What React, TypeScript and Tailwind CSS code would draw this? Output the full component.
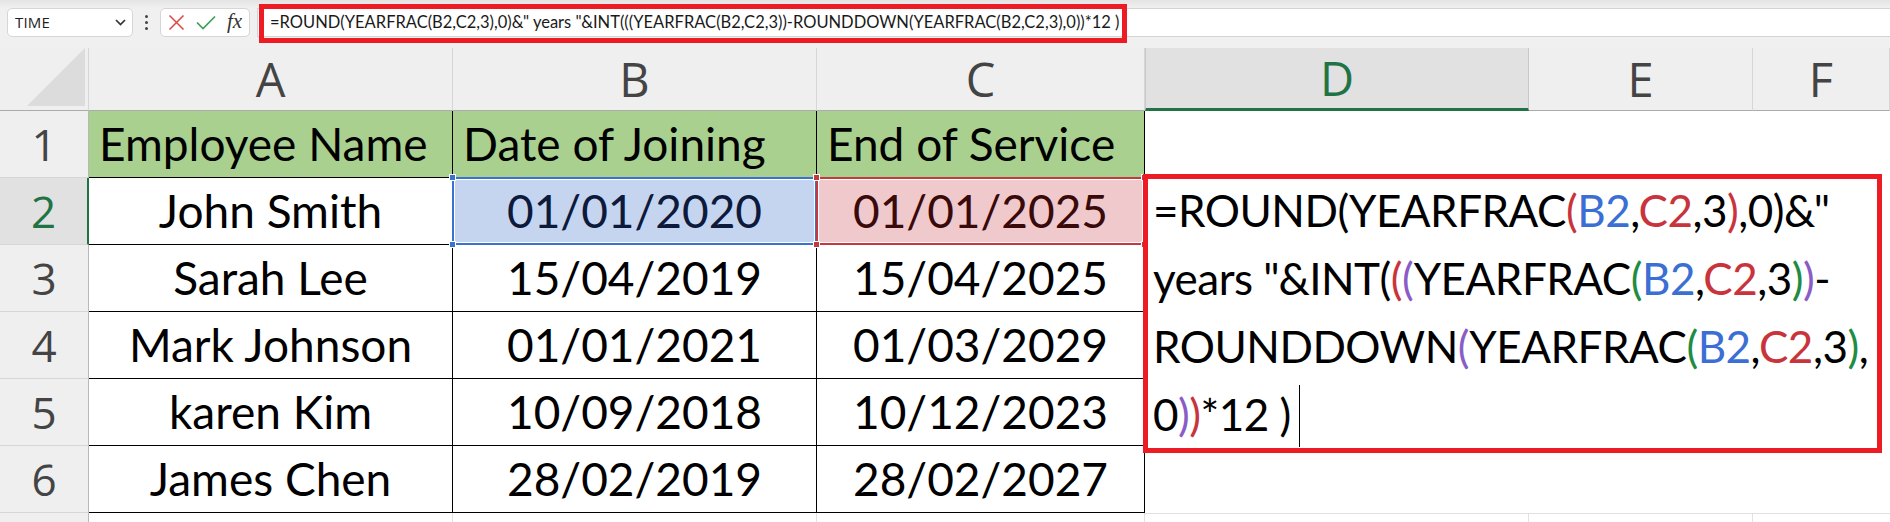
import React from "react";

type Seg = [string, "k" | "r" | "b" | "p" | "g"];

const colorCls: Record<Seg[1], string> = {
  k: "text-black",
  r: "text-[#c9343c]",
  b: "text-[#3b6fd3]",
  p: "text-[#8a5cc6]",
  g: "text-[#1e8c42]",
};

const editLines: Seg[][] = [
  [["=ROUND(YEARFRAC", "k"], ["(", "r"], ["B2", "b"], [",", "k"], ["C2", "r"], [",3", "k"], [")", "r"], [',0)&"', "k"]],
  [['years "&INT(', "k"], ["(", "r"], ["(", "p"], ["YEARFRAC", "k"], ["(", "g"], ["B2", "b"], [",", "k"], ["C2", "r"], [",3", "k"], [")", "g"], [")", "p"], ["-", "k"]],
  [["ROUNDDOWN", "k"], ["(", "p"], ["YEARFRAC", "k"], ["(", "g"], ["B2", "b"], [",", "k"], ["C2", "r"], [",3", "k"], [")", "g"], [",", "k"]],
  [["0", "k"], [")", "p"], [")", "r"], ["*12 )", "k"]],
];

const rows = [
  ["Employee Name", "Date of Joining", "End of Service"],
  ["John Smith", "01/01/2020", "01/01/2025"],
  ["Sarah Lee", "15/04/2019", "15/04/2025"],
  ["Mark Johnson", "01/01/2021", "01/03/2029"],
  ["karen Kim", "10/09/2018", "10/12/2023"],
  ["James Chen", "28/02/2019", "28/02/2027"],
];

const FORMULA = '=ROUND(YEARFRAC(B2,C2,3),0)&" years "&INT(((YEARFRAC(B2,C2,3))-ROUNDDOWN(YEARFRAC(B2,C2,3),0))*12 )';

function Handle({ pos, color }: { pos: string; color: string }) {
  return <div className={`absolute w-[7px] h-[7px] border border-white z-20 ${color} ${pos}`} />;
}

function TableCell({ r, c, text }: { r: number; c: number; text: string }) {
  const base =
    "relative border-r border-b border-black text-[46px] leading-[66px] font-['Lato',sans-serif] whitespace-nowrap overflow-visible";
  if (r === 0) {
    return <div className={`${base} bg-[#a9d08e] text-black pl-[10px]`}>{text}</div>;
  }
  if (r === 1 && c === 1) {
    return (
      <div className={`${base} bg-[#c6d5ef] text-[#0d1a3c] text-center`}>
        {text}
        <div className="absolute left-[-1px] top-[-1px] right-[-1px] bottom-[-1px] border-2 border-[#3a72cf] shadow-[inset_0_0_0_1px_#ffffff] z-10" />
        <Handle pos="left-[-4px] top-[-4px]" color="bg-[#3a72cf]" />
        <Handle pos="right-[-4px] top-[-4px]" color="bg-[#3a72cf]" />
        <Handle pos="left-[-4px] bottom-[-4px]" color="bg-[#3a72cf]" />
        <Handle pos="right-[-4px] bottom-[-4px]" color="bg-[#3a72cf]" />
      </div>
    );
  }
  if (r === 1 && c === 2) {
    return (
      <div className={`${base} bg-[#f0c9cc] text-[#3a0909] text-center`}>
        {text}
        <div className="absolute left-[-1px] top-[-1px] right-[-1px] bottom-[-1px] border-2 border-[#c2393f] shadow-[inset_0_0_0_1px_#ffffff] z-10" />
        <Handle pos="left-[-4px] top-[-4px]" color="bg-[#c2393f]" />
        <Handle pos="right-[-4px] top-[-4px]" color="bg-[#c2393f]" />
        <Handle pos="left-[-4px] bottom-[-4px]" color="bg-[#c2393f]" />
        <Handle pos="right-[-4px] bottom-[-4px]" color="bg-[#c2393f]" />
      </div>
    );
  }
  return <div className={`${base} bg-white text-black text-center`}>{text}</div>;
}

function RowHeader({ n }: { n: number }) {
  const sel = n === 2;
  return (
    <div
      className={`flex items-center justify-center border-b border-[#d6d6d6] font-['Open_Sans',sans-serif] text-[44px] ${
        sel ? "bg-[#e1e1e1] text-[#217346] border-r-2 border-r-[#217346]" : "bg-[#efefef] text-[#444444] border-r border-r-[#b8b8b8]"
      }`}
    >
      {n}
    </div>
  );
}

function ColHeader({ l, sel }: { l: string; sel?: boolean }) {
  return (
    <div
      className={`flex items-center justify-center font-['Open_Sans',sans-serif] text-[47px] ${
        sel
          ? "bg-[#e1e1e1] text-[#217346] border-x border-[#c8c8c8] border-b-[3px] border-b-[#217346]"
          : "bg-[#efefef] text-[#444444] border-r border-r-[#d6d6d6] border-b border-b-[#ababab]"
      }`}
    >
      {l}
    </div>
  );
}

export default function App() {
  return (
    <div className="relative w-[1890px] h-[522px] overflow-hidden bg-white font-['Lato',sans-serif]">
      {/* Toolbar */}
      <div className="h-[48px] bg-[#f0f0f0] relative">
        <div className="h-[8px] bg-gradient-to-b from-[#e4e4e4] to-[#f0f0f0]" />
        <div className="flex h-[29px]">
          <div className="ml-[7px] w-[126px] bg-white border border-[#d6d6d6] rounded-[5px] flex items-center justify-between pl-[7px] pr-[6px]">
            <span className="text-[15px] text-[#222222] font-['Open_Sans',sans-serif] tracking-[0.2px]">TIME</span>
            <svg width="11" height="7" viewBox="0 0 11 7">
              <polyline points="1,1 5.5,5.5 10,1" fill="none" stroke="#333333" strokeWidth="1.7" />
            </svg>
          </div>
          <div className="w-[27px] flex flex-col items-center justify-center gap-[3px]">
            <div className="w-[3px] h-[3px] rounded-full bg-[#444444]" />
            <div className="w-[3px] h-[3px] rounded-full bg-[#444444]" />
            <div className="w-[3px] h-[3px] rounded-full bg-[#444444]" />
          </div>
          <div className="w-[90px] bg-white border border-[#d6d6d6] rounded-[5px] flex items-center pl-[7px] gap-[11px]">
            <svg width="17" height="17" viewBox="0 0 17 17">
              <line x1="1.5" y1="1.5" x2="15.5" y2="15.5" stroke="#e24848" strokeWidth="1.6" />
              <line x1="15.5" y1="1.5" x2="1.5" y2="15.5" stroke="#e24848" strokeWidth="1.6" />
            </svg>
            <svg width="20" height="15" viewBox="0 0 20 15">
              <polyline points="1,7.5 7,13.5 19,1.5" fill="none" stroke="#3f9e55" strokeWidth="1.7" />
            </svg>
            <span className="font-['Liberation_Serif',serif] italic text-[21px] text-[#333333] leading-none -mt-[2px]">fx</span>
          </div>
          <div className="ml-[7px] flex-1 bg-white border-y border-l border-[#d4d4d4] flex items-center pl-[12px]">
            <span className="text-[16.5px] text-[#1a1a1a] whitespace-nowrap font-['Lato',sans-serif]">{FORMULA}</span>
          </div>
        </div>
      </div>

      {/* Sheet grid */}
      <div className="grid grid-cols-[89px_364px_364px_328px_384px_224px_137px] grid-rows-[63px_67px_67px_67px_67px_67px_67px_20px]">
        <div className="relative bg-[#efefef] border-r border-r-[#d6d6d6] border-b border-b-[#ababab]">
          <svg className="absolute right-[3px] bottom-[4px]" width="58" height="58" viewBox="0 0 58 58">
            <polygon points="58,0 58,58 0,58" fill="#dcdcdc" />
          </svg>
        </div>
        <ColHeader l="A" />
        <ColHeader l="B" />
        <ColHeader l="C" />
        <ColHeader l="D" sel />
        <ColHeader l="E" />
        <ColHeader l="F" />

        {rows.map((row, r) => (
          <React.Fragment key={r}>
            <RowHeader n={r + 1} />
            {row.map((t, c) => (
              <TableCell key={c} r={r} c={c} text={t} />
            ))}
            <div className="bg-white" />
            <div className="bg-white" />
            <div className="bg-white" />
          </React.Fragment>
        ))}

        <div className="bg-[#efefef] border-r border-r-[#b8b8b8]" />
        <div className="bg-white border-r border-[#e1e1e1]" />
        <div className="bg-white border-r border-[#e1e1e1]" />
        <div className="bg-white border-r border-[#e1e1e1]" />
        <div className="bg-white border-r border-t border-[#e1e1e1]" />
        <div className="bg-white border-r border-t border-[#e1e1e1]" />
        <div className="bg-white border-t border-[#e1e1e1]" />
      </div>

      {/* Formula bar annotation */}
      <div className="absolute left-[259px] top-[4px] w-[868px] h-[39px] border-[5px] border-[#ed1c24] pointer-events-none" />

      {/* In-cell editor with annotation */}
      <div className="absolute left-[1143px] top-[174px] w-[739px] h-[279px] bg-white border-[5px] border-[#ed1c24] overflow-hidden z-30">
        <div className="-mt-[3px] pl-[5px] text-[44px] tracking-[-0.5px] leading-[68px] font-['Lato',sans-serif] text-black">
          {editLines.map((line, i) => (
            <div key={i} className="whitespace-nowrap flex items-center">
              <span>
                {line.map(([t, c], j) => (
                  <span key={j} className={colorCls[c]}>
                    {t}
                  </span>
                ))}
              </span>
              {i === 3 && <span className="inline-block w-[1px] h-[62px] bg-black ml-[8px] mt-[4px]" />}
            </div>
          ))}
        </div>
      </div>
    </div>
  );
}
